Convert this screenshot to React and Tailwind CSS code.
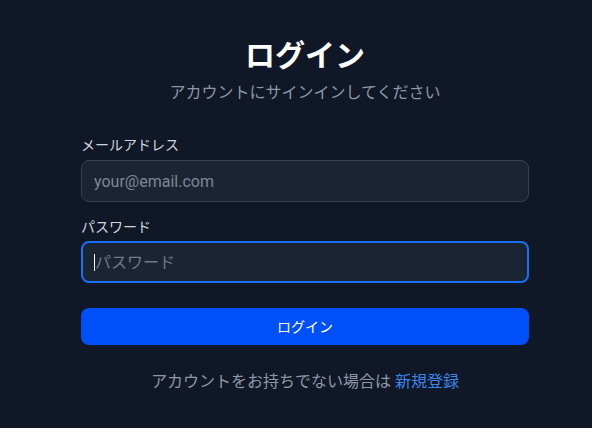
import React from 'react';

const font = { fontFamily: "Roboto, 'Noto Sans CJK JP', sans-serif" };

const App = () => {
  return (
    <div className="min-h-screen bg-[#101727] text-white" style={font}>
      <div className="ml-[81px] w-[448px] pt-[38px]">
        <h1 className="text-center text-3xl font-bold text-white">ログイン</h1>
        <p className="mt-[7px] text-center text-base text-[#8e97a6]">アカウントにサインインしてください</p>

        <form className="mt-[30px]" onSubmit={(e) => e.preventDefault()}>
          <div>
            <label className="mb-[5px] block text-sm text-[#d1d5db]">メールアドレス</label>
            <input
              type="email"
              placeholder="your@email.com"
              className="block h-[42px] w-full rounded-lg border border-[#334155] bg-[#1b2433] px-3 text-base text-white outline-none placeholder:text-[#7c8797]"
            />
          </div>
          <div className="mt-[15px]">
            <label className="mb-1 block text-sm text-[#d1d5db]">パスワード</label>
            <div className="relative">
              <input
                type="password"
                placeholder="パスワード"
                className="block h-[42px] w-full rounded-lg border-2 border-[#1a6ff5] bg-[#1b2433] px-[12px] text-base text-white outline-none placeholder:text-[#6f7a8b]"
              />
              <span className="absolute left-[13px] top-[13px] h-[17px] w-px bg-white" />
            </div>
          </div>
          <button
            type="submit"
            className="mt-[25px] block h-[37px] w-full rounded-lg bg-[#0050fa] text-sm text-white"
          >
            ログイン
          </button>
        </form>

        <p className="mt-[25px] text-center text-base text-[#8e97a6]">
          アカウントをお持ちでない場合は <a href="#" className="text-[#3b86e8]">新規登録</a>
        </p>
      </div>
    </div>
  );
};

export default App;
